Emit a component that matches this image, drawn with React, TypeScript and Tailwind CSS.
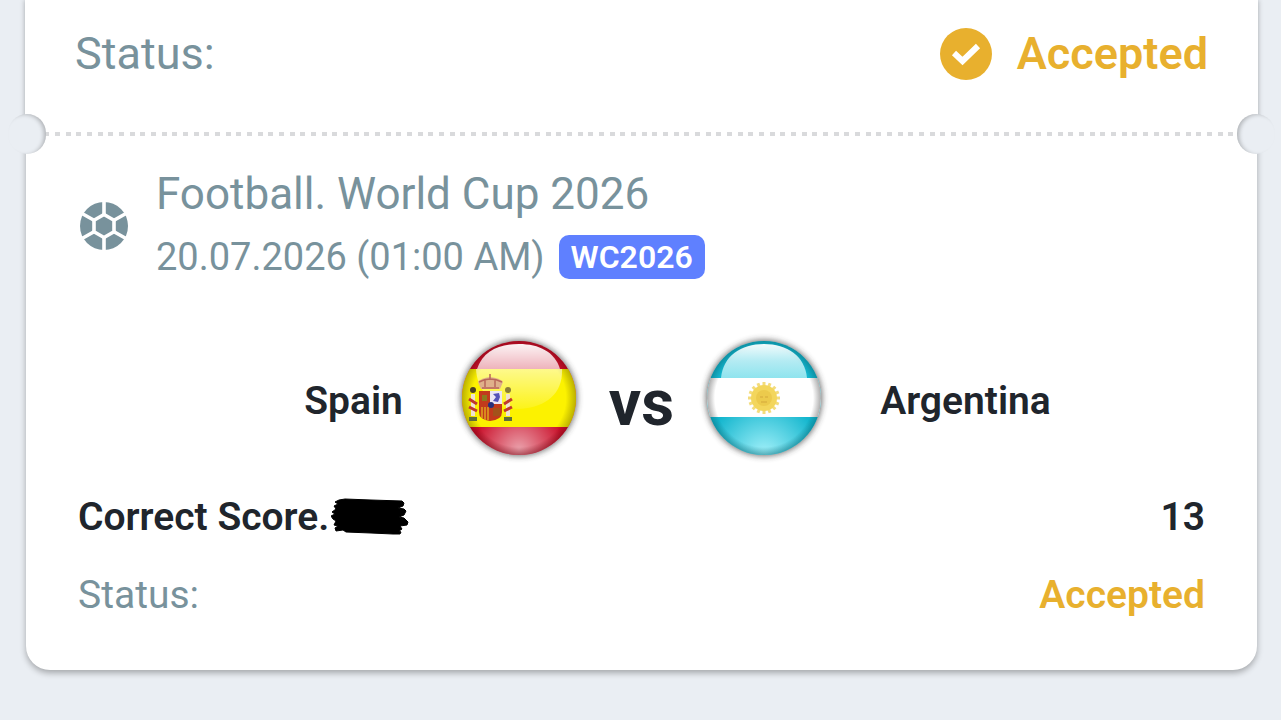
import React from "react";

const CheckIcon = () => (
  <svg viewBox="0 0 52 52" className="h-[52px] w-[52px]" aria-hidden="true">
    <circle cx="26" cy="26" r="26" fill="#e8b02e" />
    <path
      d="M14 25 L22.5 33 L38 18"
      fill="none"
      stroke="#fff"
      strokeWidth="6"
    />
  </svg>
);

const BallIcon = () => (
  <svg viewBox="0 0 48 48" className="h-12 w-12 shrink-0" aria-hidden="true">
    <circle cx="24" cy="24" r="24" fill="#78929c" />
    <g fill="none" stroke="#fff" strokeWidth="3.6">
      <path d="M24 12.5 L34 18.2 V29.8 L24 35.5 L14 29.8 V18.2 Z" />
      <path d="M24 12.5 V-1 M24 35.5 V49 M34 18.2 L46 11.5 M34 29.8 L46 36.5 M14 18.2 L2 11.5 M14 29.8 L2 36.5" />
    </g>
  </svg>
);

const Scribble = () => (
  <svg viewBox="0 -1 78 40" className="h-10 w-[78px]" aria-hidden="true">
    <path
      d="M4 4 L8 2 L14 1 L40 2 L71 3 L73 5 L72 8 L67 10 L73 11 L75 13 L73 17 L68 19 L73 20 L77 24 L76 27 L69 28 L71 31 L68 33 L70 34 L69 36 L62 36 L40 35 L15 34 L12 32 L5 33 L4 30 L7 28 L3 27 L5 23 L2 21 L0 18 L4 16 L1 14 L5 11 L3 8 L7 6 Z"
      fill="#000"
      stroke="#000"
      strokeWidth="1"
      strokeLinejoin="round"
    />
  </svg>
);

const SpainFlag = () => (
  <svg
    viewBox="0 3 140 140"
    className="-m-3 h-[140px] w-[140px]"
    role="img"
    aria-label="Flag of Spain"
  >
    <defs>
      <clipPath id="es-clip">
        <circle cx="70" cy="73" r="57" />
      </clipPath>
      <linearGradient id="es-gloss" x1="0" y1="0" x2="0" y2="1">
        <stop offset="0" stopColor="#fff" stopOpacity="0.95" />
        <stop offset="1" stopColor="#fff" stopOpacity="0.68" />
      </linearGradient>
      <linearGradient id="es-shine" x1="0" y1="0" x2="0" y2="1">
        <stop offset="0" stopColor="#fff" stopOpacity="0.55" />
        <stop offset="1" stopColor="#fff" stopOpacity="0.1" />
      </linearGradient>
      <radialGradient id="es-glow" cx="0.5" cy="0.95" r="0.4">
        <stop offset="0" stopColor="#fff" stopOpacity="0.6" />
        <stop offset="1" stopColor="#fff" stopOpacity="0" />
      </radialGradient>
      <radialGradient id="es-edge">
        <stop offset="0.82" stopColor="#5a5000" stopOpacity="0" />
        <stop offset="1" stopColor="#5a5000" stopOpacity="0.4" />
      </radialGradient>
      <radialGradient id="es-red-edge">
        <stop offset="0.86" stopColor="#6a000c" stopOpacity="0" />
        <stop offset="1" stopColor="#6a000c" stopOpacity="0.45" />
      </radialGradient>
      <clipPath id="es-band">
        <rect y="44" width="140" height="58" />
      </clipPath>
      <filter id="es-soft" x="-20%" y="-20%" width="140%" height="140%">
        <feGaussianBlur stdDeviation="3" />
      </filter>
    </defs>
    <circle cx="70" cy="73" r="58" fill="#333" opacity="0.7" filter="url(#es-soft)" />
    <g clipPath="url(#es-clip)">
      <rect width="140" height="140" fill="#cb122c" />
      <circle cx="70" cy="73" r="57" fill="url(#es-glow)" />
      <circle cx="70" cy="73" r="57" fill="url(#es-red-edge)" />
      <g clipPath="url(#es-band)">
        <rect width="140" height="140" fill="#fcf200" />
        <circle cx="70" cy="73" r="57" fill="url(#es-edge)" />
      </g>
      <path
        d="M27 44 H113 C114 66 100 82 70 84 C44 84 28 66 27 44 Z"
        fill="url(#es-shine)"
      />
      {/* coat of arms */}
      <g>
        <path d="M29 57 Q32 53 41 52 Q51 53 54 57 L51 64 H32 Z" fill="#dfb08a" />
        <path d="M30 57 Q41 51 53 57 M33 63 H50 M41 49 V55 M36 55 V62 M46 55 V62" stroke="#b9665a" strokeWidth="1.5" fill="none" />
        <path d="M30 66 H53 V87 Q53 95 41 96 Q30 95 30 87 Z" fill="#c23a1c" />
        <rect x="41" y="66" width="12" height="13" fill="#ece6f5" />
        <path d="M44 69 L50 68 L51 72 L49 77 L44 76 L47 72 Z" fill="#5553b8" />
        <path d="M33 70 h5 v6 h-5 z" fill="#8c7a1c" />
        <path d="M33 82 V93 M36 82 V95 M39 82 V95" stroke="#e0a51e" strokeWidth="1.5" />
        <path d="M44 83 h7 v8 h-7 z" fill="#a3521a" />
        <circle cx="42" cy="80" r="3" fill="#27307c" />
        <path d="M24 69 V91 M59 69 V91" stroke="#efe3d2" strokeWidth="4" />
        <path d="M20 74 L28 79 M20 82 L28 86 M63 74 L55 79 M63 82 L55 86" stroke="#c0392d" strokeWidth="3" />
        <circle cx="24" cy="65" r="3" fill="#4a4022" />
        <circle cx="59" cy="65" r="3" fill="#8a7d3a" />
        <path d="M20 94 h8 M55 94 h8" stroke="#5f6d3c" strokeWidth="4" />
      </g>
      <path
        d="M28 44 C34 26 50 19 70 19 C90 19 106 27 111 44 Z"
        fill="url(#es-gloss)"
      />
    </g>
  </svg>
);

const rays = Array.from({ length: 16 }, (_, i) => i * 22.5);

const ArgentinaFlag = () => (
  <svg
    viewBox="0 3 140 140"
    className="-m-3 h-[140px] w-[140px]"
    role="img"
    aria-label="Flag of Argentina"
  >
    <defs>
      <clipPath id="ar-clip">
        <circle cx="70" cy="73" r="57" />
      </clipPath>
      <linearGradient id="ar-gloss" x1="0" y1="0" x2="0" y2="1">
        <stop offset="0" stopColor="#fff" stopOpacity="0.95" />
        <stop offset="0.5" stopColor="#e9fdff" stopOpacity="0.75" />
        <stop offset="1" stopColor="#c4f8fc" stopOpacity="0.7" />
      </linearGradient>
      <radialGradient id="ar-glow" cx="0.5" cy="1" r="0.5">
        <stop offset="0" stopColor="#b4f8ff" stopOpacity="0.9" />
        <stop offset="1" stopColor="#b4f8ff" stopOpacity="0" />
      </radialGradient>
      <radialGradient id="ar-edge">
        <stop offset="0.86" stopColor="#066a78" stopOpacity="0" />
        <stop offset="1" stopColor="#066a78" stopOpacity="0.5" />
      </radialGradient>
      <radialGradient id="ar-rim">
        <stop offset="0.86" stopColor="#333" stopOpacity="0" />
        <stop offset="1" stopColor="#333" stopOpacity="0.4" />
      </radialGradient>
      <clipPath id="ar-band">
        <rect y="53" width="140" height="39" />
      </clipPath>
      <filter id="ar-soft" x="-20%" y="-20%" width="140%" height="140%">
        <feGaussianBlur stdDeviation="3" />
      </filter>
    </defs>
    <circle cx="70" cy="73" r="58" fill="#333" opacity="0.7" filter="url(#ar-soft)" />
    <g clipPath="url(#ar-clip)">
      <rect width="140" height="140" fill="#14b6ce" />
      <circle cx="70" cy="73" r="57" fill="url(#ar-glow)" />
      <circle cx="70" cy="73" r="57" fill="url(#ar-edge)" />
      <g clipPath="url(#ar-band)">
        <rect width="140" height="140" fill="#fff" />
        <circle cx="70" cy="73" r="57" fill="url(#ar-rim)" />
      </g>
      <g stroke="#f3dc7c" strokeWidth="3">
        {rays.map((angle) => (
          <path key={angle} d="M70 73 V57" transform={`rotate(${angle} 70 73)`} />
        ))}
      </g>
      <circle cx="70" cy="73" r="13" fill="#f3d65c" />
      <circle cx="70" cy="73" r="8" fill="#ecca4c" />
      <path d="M66 72 h3 M71 72 h3 M67 77 h6" stroke="#dcb440" strokeWidth="1.5" />
      <path
        d="M27 53 C29 31 47 19 70 19 C93 19 111 31 113 53 Z"
        fill="url(#ar-gloss)"
      />
    </g>
  </svg>
);

// Perforated edge between two parts of the coupon
const TearLine = () => (
  <div className="relative z-10 -my-5 flex items-center pr-1.5 pl-2">
    <div className="h-10 w-[38px] rounded-full bg-[#eaeef3] shadow-[inset_-3px_1px_4px_-1px_rgba(0,0,0,0.25)]" />
    <div className="h-1 flex-1 bg-[linear-gradient(90deg,#d9dadc_0_3px,transparent_3px_9px,#d9dadc_9px_14px,transparent_14px_20px,#d9dadc_20px_25px,transparent_25px_30px,#d9dadc_30px_32px)] bg-[length:32px_4px]" />
    <div className="h-10 w-[38px] rounded-full bg-[#eaeef3] shadow-[inset_3px_1px_4px_-1px_rgba(0,0,0,0.25)]" />
  </div>
);

const App = () => {
  return (
    <main className="min-h-screen overflow-hidden bg-[#eaeef3] font-['Roboto',sans-serif] text-[#78929c]">
      <section className="mr-[23px] ml-[25px] flex items-center justify-between bg-white px-[50px] pt-7 pb-[54px] shadow-[0_0_5px_rgba(0,0,0,0.3)]">
        <span className="text-[45px] leading-[52px]">Status:</span>
        <div className="flex items-center gap-[25px] text-[#e8b02e]">
          <CheckIcon />
          <span className="text-[45px] leading-[52px] font-semibold">
            Accepted
          </span>
        </div>
      </section>

      <TearLine />

      <section className="mr-6 ml-[26px] rounded-b-3xl bg-white px-[52px] pt-[38px] pb-[51px] shadow-[0_3px_6px_rgba(0,0,0,0.3)] [clip-path:inset(0_-20px_-20px_-20px)]">
        <div className="flex items-center gap-7 pl-0.5">
          <BallIcon />
          <div>
            <h2 className="text-[44px] leading-[44px]">
              Football. World Cup 2026
            </h2>
            <div className="mt-[19px] flex items-center gap-[14px]">
              <time className="text-[38px] leading-[44px]">
                20.07.2026 (01:00 AM)
              </time>
              <span className="rounded-[10px] bg-[#5f80ff] px-3 text-[32px] leading-[44px] font-semibold text-white">
                WC2026
              </span>
            </div>
          </div>
        </div>

        <div className="mt-[61px] grid grid-cols-[1fr_auto_1fr] items-center gap-8 text-[39px] leading-[48px] font-semibold text-[#20252c]">
          <div className="flex items-center justify-end gap-[58px]">
            <span className="pt-1.5">Spain</span>
            <SpainFlag />
          </div>
          <span className="pt-3 text-[64px] font-bold">vs</span>
          <div className="flex items-center gap-[58px]">
            <ArgentinaFlag />
            <span className="pt-1.5">Argentina</span>
          </div>
        </div>

        <div className="mt-[37px] flex items-center justify-between text-[39px] leading-[48px] font-semibold text-[#20252c]">
          <div className="flex items-center gap-0.5">
            <span>Correct Score.</span>
            <Scribble />
          </div>
          <span>13</span>
        </div>

        <div className="mt-[30px] flex items-center justify-between text-[39px] leading-[48px]">
          <span>Status:</span>
          <span className="font-semibold text-[#e8b02e]">Accepted</span>
        </div>
      </section>
    </main>
  );
};

export default App;
